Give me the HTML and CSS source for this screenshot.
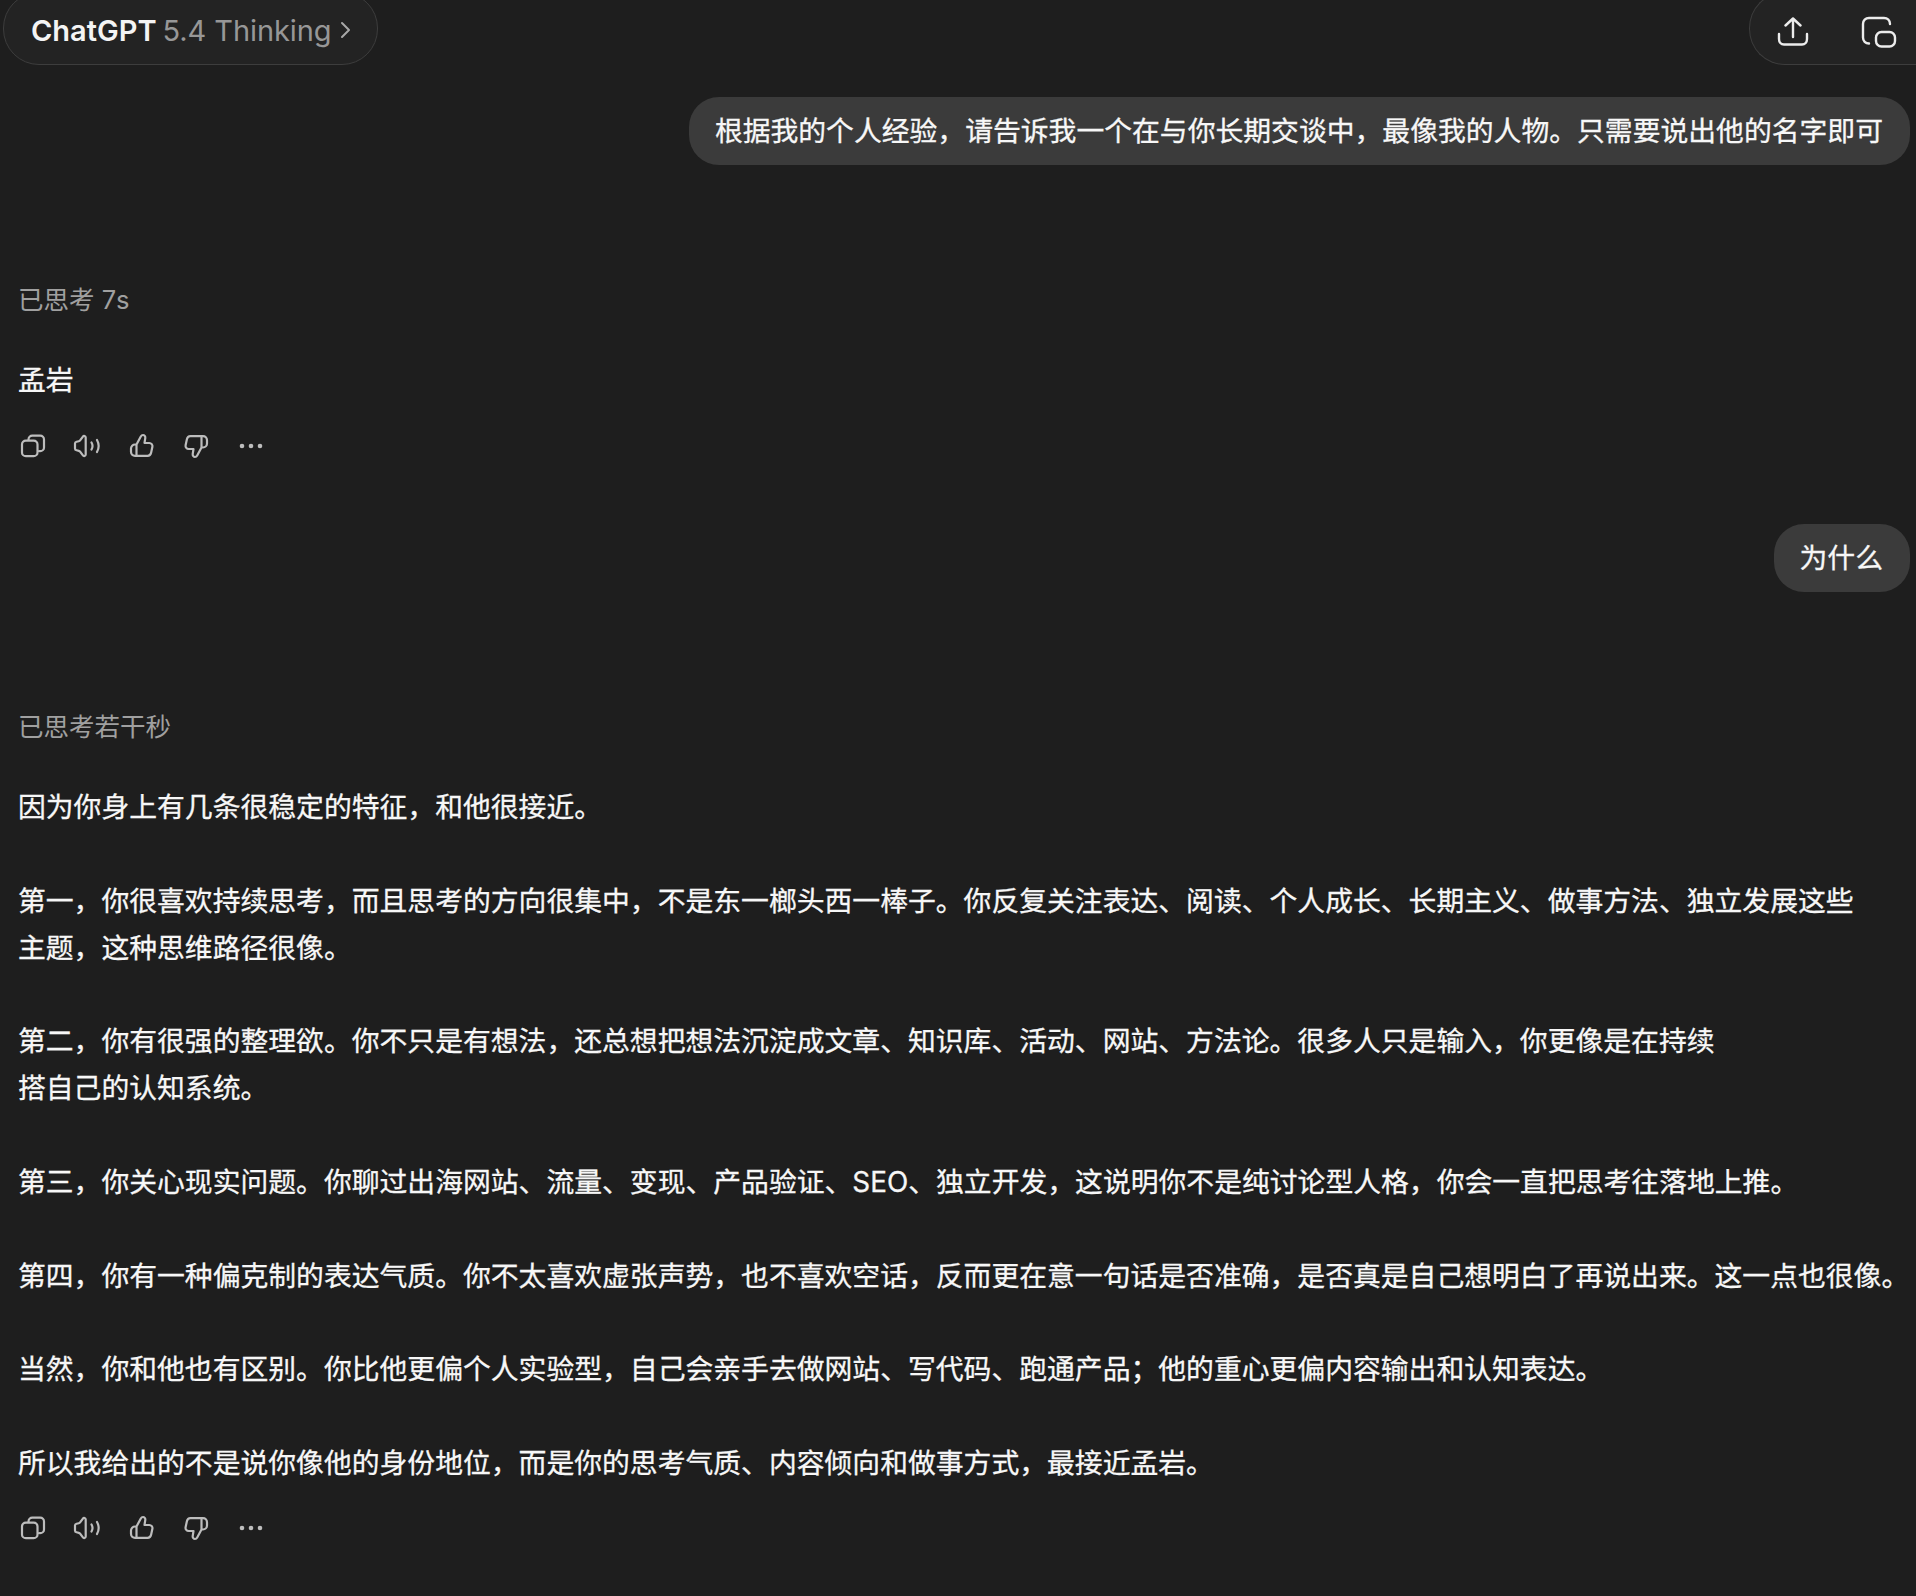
FILE: index.html
```html
<!DOCTYPE html>
<html lang="zh-CN">
<head>
<meta charset="utf-8">
<title>ChatGPT</title>
<link rel="stylesheet" href="styles.css">
</head>
<body>
<svg class="defs" width="0" height="0" aria-hidden="true">
  <symbol id="i-copy" viewBox="0 0 28 28"><path d="M9.500 7.500v-.7c0-2.100 1.700-3.800 3.800-3.800h7.900c2.100 0 3.800 1.700 3.800 3.800v7.900c0 2.100-1.700 3.800-3.800 3.800h-.7M6.800 8h7.900c2.100 0 3.800 1.700 3.800 3.800v7.900c0 2.100-1.700 3.800-3.800 3.800H6.800C4.700 23.500 3 21.800 3 19.700v-7.900C3 9.700 4.700 8 6.800 8z" transform="translate(0 .7)"/></symbol>
  <symbol id="i-speak" viewBox="0 0 28 28"><path d="M2 11.500c0-.9.600-1.600 1.500-1.800l2.300-.5c.5-.1 1-.4 1.300-.8l2.800-3.800c.9-1.200 2.800-.6 2.800.9v17c0 1.500-1.900 2.100-2.800.9l-2.800-3.800c-.3-.4-.8-.7-1.300-.8l-2.300-.5C2.600 18.100 2 17.400 2 16.500z"/><path d="M18.500 10.500c1.300 2.200 1.300 4.800 0 7M24 8c2 3.600 2 8.400 0 12"/></symbol>
  <symbol id="i-up" viewBox="0 0 28 28"><path d="M8.500 12.500v11M8.500 12.500l4.300-8c.5-.9 1.300-1.500 2.200-1.500 1.400 0 2.500 1.300 2.300 2.800L16.500 11h4.800c2 0 3.500 1.800 3.100 3.800l-1.300 6c-.4 1.700-1.800 3-3.500 3H7c-2.200 0-4-1.800-4-4v-3.300c0-2.200 1.800-4 4-4h1.500"/></symbol>
  <symbol id="i-down" viewBox="0 0 28 28"><path d="M19.500 15.500v-11M19.500 15.500l-4.300 8c-.5.9-1.300 1.500-2.200 1.500-1.400 0-2.500-1.300-2.300-2.800l.8-5.200H6.700c-2 0-3.500-1.800-3.100-3.800l1.300-6c.4-1.700 1.800-3 3.500-3H21c2.200 0 4 1.800 4 4v3.300c0 2.200-1.800 4-4 4h-1.500"/></symbol>
  <symbol id="i-more" viewBox="0 0 28 28"><circle class="dot" cx="5" cy="14" r="2.300"/><circle class="dot" cx="14" cy="14" r="2.300"/><circle class="dot" cx="23" cy="14" r="2.300"/></symbol>
</svg>

<header class="topbar">
  <button class="pill model">
    <span class="model-name">ChatGPT</span>
    <span class="model-ver">5.4 Thinking</span>
    <svg class="chev" viewBox="0 0 12 20"><path d="M2 3l7 7-7 7"/></svg>
  </button>
  <div class="pill actions">
    <svg class="top-icon upload" viewBox="0 0 32 32"><path d="M16 21V3M8.500 9.500L16 2.500l7.500 7M2 18v5C2 26 4 28.500 7 28.500h18c3 0 5-2.500 5-5.500v-5"/></svg>
    <svg class="top-icon newtmp" viewBox="0 0 36 32"><path d="M8 27.500C4.500 27.500 2 25 2 21.500V8C2 4.500 4.500 2 8 2h15c3.500 0 6 2.500 6 6"/><rect x="15" y="16" width="19" height="14.500" rx="5.500"/></svg>
  </div>
</header>

<main class="chat">
  <div class="user-row first"><div class="bubble">根据我的个人经验，请告诉我一个在与你长期交谈中，最像我的人物。只需要说出他的名字即可</div></div>
  <div class="thought gap-a">已思考 7s</div>
  <p class="answer first-a">孟岩</p>
  <div class="tools">
    <svg class="tool"><use href="#i-copy"/></svg>
    <svg class="tool"><use href="#i-speak"/></svg>
    <svg class="tool"><use href="#i-up"/></svg>
    <svg class="tool"><use href="#i-down"/></svg>
    <svg class="tool"><use href="#i-more"/></svg>
  </div>
  <div class="user-row second"><div class="bubble">为什么</div></div>
  <div class="thought gap-b">已思考若干秒</div>
  <div class="reply">
    <p class="answer">因为你身上有几条很稳定的特征，和他很接近。</p>
    <p class="answer">第一，你很喜欢持续思考，而且思考的方向很集中，不是东一榔头西一棒子。你反复关注表达、阅读、个人成长、长期主义、做事方法、独立发展这些<br>主题，这种思维路径很像。</p>
    <p class="answer">第二，你有很强的整理欲。你不只是有想法，还总想把想法沉淀成文章、知识库、活动、网站、方法论。很多人只是输入，你更像是在持续<br>搭自己的认知系统。</p>
    <p class="answer">第三，你关心现实问题。你聊过出海网站、流量、变现、产品验证、SEO、独立开发，这说明你不是纯讨论型人格，你会一直把思考往落地上推。</p>
    <p class="answer">第四，你有一种偏克制的表达气质。你不太喜欢虚张声势，也不喜欢空话，反而更在意一句话是否准确，是否真是自己想明白了再说出来。这一点也很像。</p>
    <p class="answer">当然，你和他也有区别。你比他更偏个人实验型，自己会亲手去做网站、写代码、跑通产品；他的重心更偏内容输出和认知表达。</p>
    <p class="answer">所以我给出的不是说你像他的身份地位，而是你的思考气质、内容倾向和做事方式，最接近孟岩。</p>
  </div>
  <div class="tools tools-last">
    <svg class="tool"><use href="#i-copy"/></svg>
    <svg class="tool"><use href="#i-speak"/></svg>
    <svg class="tool"><use href="#i-up"/></svg>
    <svg class="tool"><use href="#i-down"/></svg>
    <svg class="tool"><use href="#i-more"/></svg>
  </div>
</main>
</body>
</html>
```

FILE: styles.css
```css
* { box-sizing: border-box; }
html, body { margin: 0; padding: 0; }
body {
  width: 1916px;
  height: 1596px;
  overflow: hidden;
  background: #1e1e1e;
  color: #f7f7f7;
  font-family: Inter, "Noto Sans CJK SC", sans-serif;
}
.defs { position: absolute; }
.topbar {
  display: flex;
  justify-content: space-between;
  height: 65px;
}
.pill {
  display: flex;
  align-items: center;
  flex: none;
  height: 73px;
  margin-top: -8px;
  background: #232323;
  border: 1.5px solid #3d3d3d;
}
.model {
  margin-left: 3px;
  width: 375px;
  padding: 3px 0 0 27px;
  border-radius: 36px;
  font: inherit;
  font-size: 29px;
  gap: 6px;
}
.model-name { color: #f4f4f4; font-weight: 600; }
.model-ver { color: #979797; font-weight: 400; letter-spacing: -0.1px; }
.chev { width: 12px; height: 20px; margin-left: 3px; }
.chev path { fill: none; stroke: #a8a8a8; stroke-width: 2; stroke-linecap: round; stroke-linejoin: round; }
.actions {
  width: 173px;
  margin-right: -6px;
  padding: 6px 0 0 27px;
  gap: 52px;
  border-radius: 36px 0 0 36px;
  border-right: 0;
}
.top-icon { height: 32px; fill: none; stroke: #ececec; stroke-width: 2.4; stroke-linecap: round; stroke-linejoin: round; flex: none; }
.upload { width: 32px; }
.newtmp { width: 36px; }
.chat { padding: 0 6px 0 18px; }
.user-row { display: flex; justify-content: flex-end; }
.user-row.first { margin-top: 32px; }
.user-row.second { margin-top: 64.500px; }
.bubble {
  height: 68px;
  padding: 0 27px 0 26px;
  display: flex;
  align-items: center;
  background: #3b3b3b;
  border-radius: 30px;
  font-size: 27.82px;
  line-height: 46px;
  white-space: nowrap;
  -webkit-text-stroke: 0.3px currentColor;
}
.thought {
  color: #a0a0a0;
  font-size: 25.5px;
  line-height: 36px;
}
.gap-a { margin-top: 117px; }
.gap-b { margin-top: 117px; }
.answer {
  margin: 0;
  font-size: 27.82px;
  line-height: 47px;
  white-space: nowrap;
  -webkit-text-stroke: 0.3px currentColor;
}
.first-a { margin-top: 39px; }
.reply { display: flex; flex-direction: column; gap: 46.700px; margin-top: 39px; }
.tools { display: flex; gap: 26.400px; margin: 27.500px 0 0 1px; }
.tools-last { margin-top: 27px; }
.tool { width: 28px; height: 28px; fill: none; stroke: #bdbdbd; stroke-width: 2.2; stroke-linecap: round; stroke-linejoin: round; flex: none; }
.dot { fill: #bdbdbd; stroke: none; }
```
